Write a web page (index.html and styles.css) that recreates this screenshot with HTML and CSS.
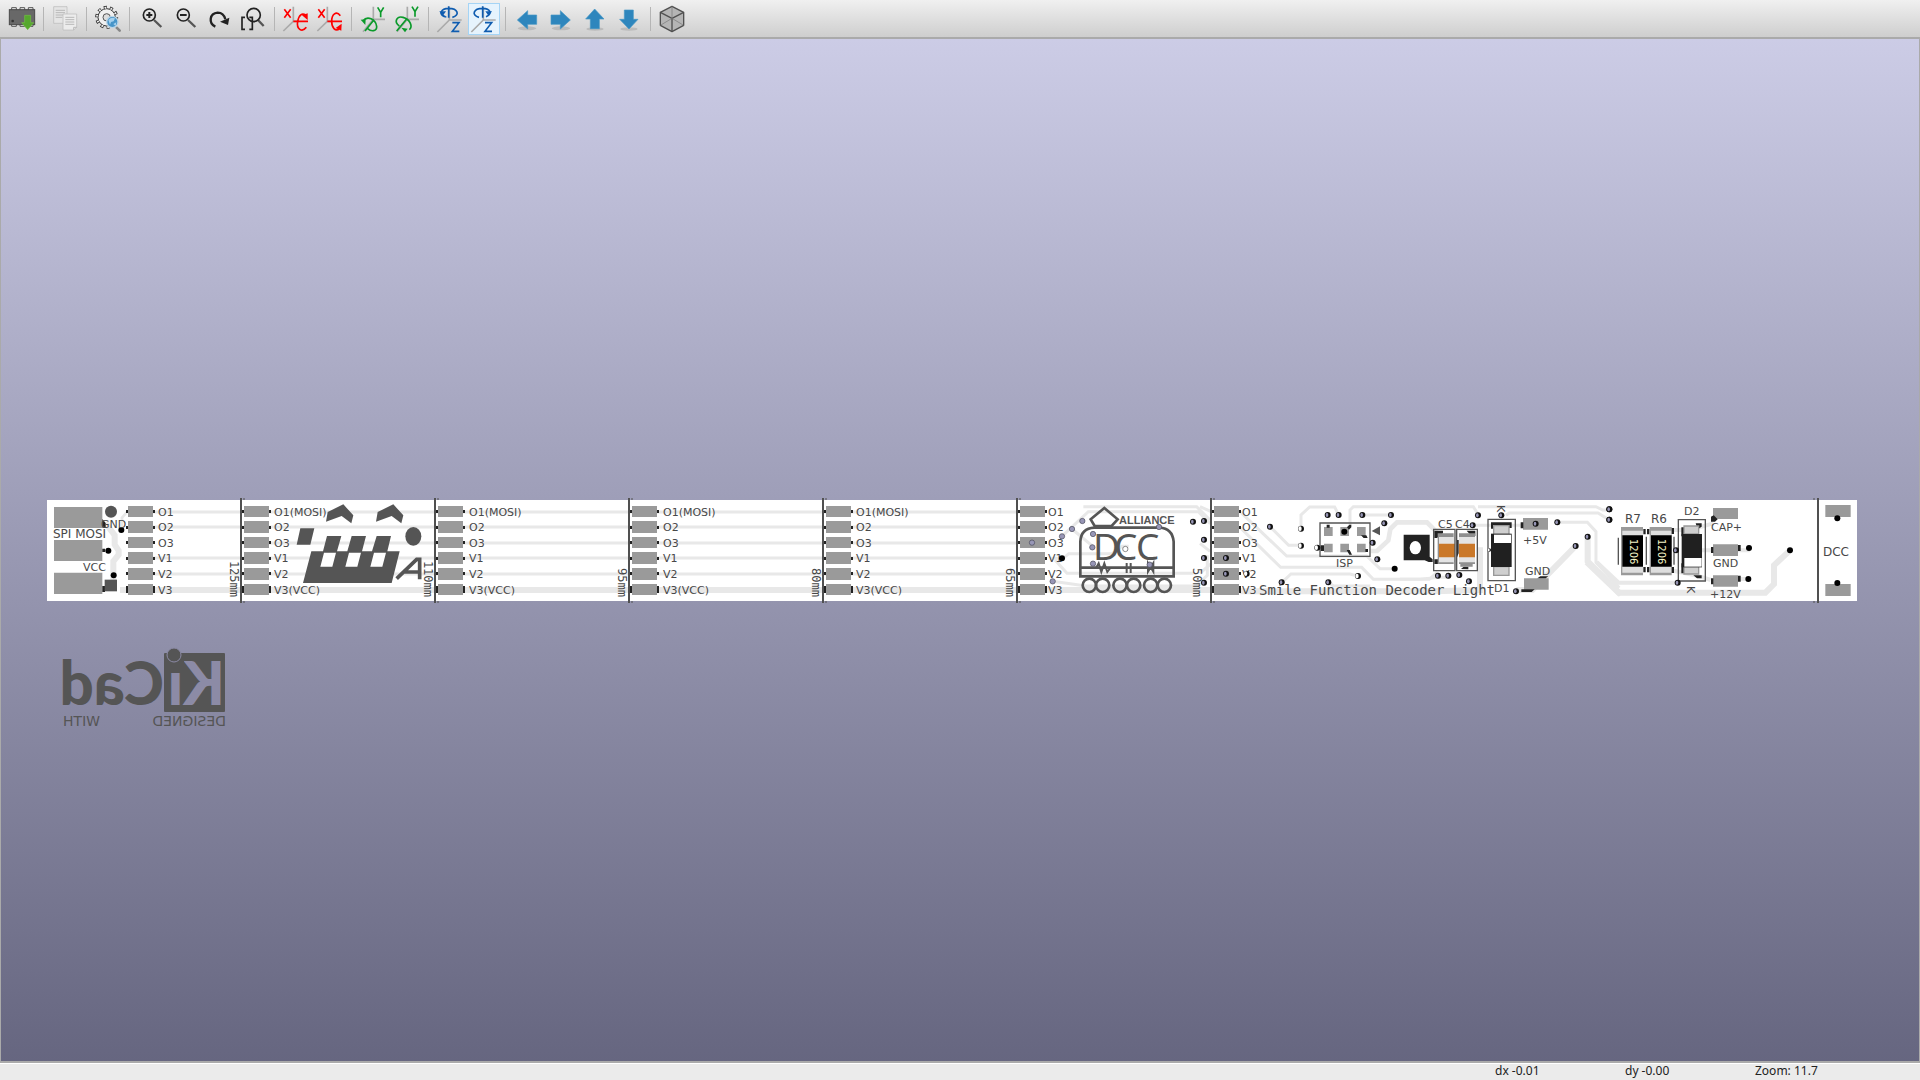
FILE: index.html
```html
<!DOCTYPE html>
<html lang="en">
<head>
<meta charset="utf-8">
<title>3D Viewer</title>
<link rel="stylesheet" href="styles.css">
</head>
<body>
<header class="toolbar" role="toolbar" aria-label="3D viewer">
  <button class="tool" aria-label="Reload board"><svg viewBox="0 0 96 96">
    <g fill="#eee" stroke="#555" stroke-width="3"><path d="M17 22v-8h14v8M42 22v-8h14v8M67 22v-8h14v8M17 62v8h14v-8M42 62v8h14v-8M67 62v8h14v-8"/></g>
    <rect x="10" y="20" width="76" height="45" fill="#686868" stroke="#494949" stroke-width="3"/><circle cx="20" cy="54" r="4" fill="#333"/>
    <path d="M56 37h18v22h9L65 80 47 59h9z" fill="#56a82e" stroke="#72c043" stroke-width="2"/></svg></button>
  <span class="sep"></span>
  <button class="tool" aria-label="Copy image"><svg viewBox="0 0 96 96" stroke="#b8b8b8" stroke-width="2">
    <path d="M14 11h40v50H14z" fill="#e5e5e5"/><path d="M20 22h28M20 29h28M20 36h28M20 43h20" stroke-width="3"/>
    <path d="M42 33h41v40l-9 8H42z" fill="#ececec"/><path d="M49 43h27M49 50h27M49 57h27M49 64h27M83 73h-9v8" stroke-width="3" fill="none"/></svg></button>
  <span class="sep"></span>
  <button class="tool" aria-label="Render options"><svg viewBox="0 0 96 96">
    <circle cx="44" cy="43" r="30" fill="none" stroke="#333" stroke-width="9" stroke-dasharray="9.4 9.4"/>
    <circle cx="44" cy="43" r="26" fill="#f0f0f0" stroke="#333" stroke-width="3"/>
    <circle cx="44" cy="43" r="29" fill="none" stroke="#f0f0f0" stroke-width="6" stroke-dasharray="5 13.2" stroke-dashoffset="-2"/>
    <circle cx="44" cy="43" r="11" fill="#ddd" stroke="#555" stroke-width="3"/>
    <path d="M74 74l9 9" stroke="#888" stroke-width="8" stroke-linecap="round"/>
    <circle cx="61" cy="57" r="17" fill="#4795c9" stroke="#bcd5e6" stroke-width="4"/><path d="M49 51q9-10 20-5l-4 9-8 2-3 8zM64 63l9-5-2 11z" fill="#a5d0ed"/></svg></button>
  <span class="sep"></span>
  <button class="tool" aria-label="Zoom in"><svg viewBox="0 0 96 96" class="ink"><path d="M57 51l22 21" stroke="#555" stroke-width="7"/><circle cx="43" cy="36" r="18"/><path d="M43 27v18M34 36h18" stroke-width="6"/></svg></button>
  <button class="tool" aria-label="Zoom out"><svg viewBox="0 0 96 96" class="ink"><path d="M57 51l22 21" stroke="#555" stroke-width="7"/><circle cx="43" cy="36" r="18"/><path d="M33 36h20" stroke-width="6"/></svg></button>
  <button class="tool" aria-label="Redraw"><svg viewBox="0 0 96 96" class="ink"><path d="M37 71C16 61 19 31 44 29c13 0 20 8 23 20" stroke-width="7"/><path d="M79 44l-4 22-24-10z" fill="#222" stroke="none"/></svg></button>
  <button class="tool" aria-label="Zoom to fit"><svg viewBox="0 0 96 96" class="ink"><path d="M24 43h-9v36h9M37 43h9v36h-9" stroke-width="5"/><path d="M63 51l17 18" stroke="#555" stroke-width="7"/><circle cx="50" cy="36" r="20"/></svg></button>
  <span class="sep"></span>
  <button class="tool" aria-label="Rotate X clockwise"><svg viewBox="0 0 96 96" class="spin red"><path class="axis" d="M40 11v44l-30 29M40 55h16"/><path d="M40 55h44M79 73c-14 18-30 4-26-18 4-20 13-26 24-19"/><path class="head" d="M83 31v20L66 37z"/><path d="M13 19l19 25M32 19L13 44"/></svg></button>
  <button class="tool" aria-label="Rotate X counterclockwise"><svg viewBox="0 0 96 96" class="spin red"><path class="axis" d="M40 11v44l-30 29M40 55h16"/><path d="M40 55h44M79 38c-12-16-26-4-26 17 0 20 11 30 22 24"/><path class="head" d="M83 62l-1 21-17-8z"/><path d="M13 19l19 25M32 19L13 44"/></svg></button>
  <span class="sep"></span>
  <button class="tool" aria-label="Rotate Y clockwise"><svg viewBox="0 0 96 96" class="spin green"><path class="axis" d="M49 11v38h35M49 49L18 86"/><path d="M24 84l27-34M18 54c13-18 38-5 41 16 1 15-16 17-27 7"/><path class="head" d="M11 50l15-1-1 17z"/><path d="M62 13l9 15 9-15M71 28v15"/></svg></button>
  <button class="tool" aria-label="Rotate Y counterclockwise"><svg viewBox="0 0 96 96" class="spin green"><path class="axis" d="M49 11v38h35M49 49L18 86"/><path d="M17 84l30-36M25 69C7 56 18 38 36 43c22 6 30 28 19 37"/><path class="head" d="M31 74l19 3-8 11z"/><path d="M63 11l9 15 9-15M72 26v15"/></svg></button>
  <span class="sep"></span>
  <button class="tool" aria-label="Rotate Z clockwise"><svg viewBox="0 0 96 96" class="spin blue"><path class="axis" d="M46 11v40h37M46 51L10 87"/><path d="M44 10v34M55 43c24-6 17-27-11-27-24 0-30 18-10 25M20 28c2 8 9 13 17 14"/><path class="head" d="M16 25l20 0-10 14z"/><path d="M55 59h20L55 85h21"/></svg></button>
  <button class="tool on" aria-label="Rotate Z counterclockwise" aria-pressed="true"><svg viewBox="0 0 96 96" class="spin blue"><path class="axis" d="M46 11v40h37M46 51L10 87"/><path d="M44 10v34M33 43c-24-6-17-27 11-27 24 0 30 18 10 25"/><path class="head" d="M72 25l-20 0 10 14z"/><path d="M51 59h20L51 85h21"/></svg></button>
  <span class="sep"></span>
  <button class="tool" aria-label="Move left"><svg viewBox="0 0 96 96" class="arrow"><ellipse cx="48" cy="76" rx="28" ry="6"/><path d="M19 51l31-28v13h27v28H50v14z"/></svg></button>
  <button class="tool" aria-label="Move right"><svg viewBox="0 0 96 96" class="arrow"><ellipse cx="48" cy="76" rx="28" ry="6"/><path d="M76 51L46 23v13H18v28h28v14z"/></svg></button>
  <button class="tool" aria-label="Move up"><svg viewBox="0 0 96 96" class="arrow"><ellipse cx="48" cy="78" rx="26" ry="5"/><path d="M47 18l28 30H61v29H34V48H20z"/></svg></button>
  <button class="tool" aria-label="Move down"><svg viewBox="0 0 96 96" class="arrow"><ellipse cx="48" cy="78" rx="26" ry="5"/><path d="M48 78L20 49h14V21h27v28h14z"/></svg></button>
  <span class="sep"></span>
  <button class="tool" aria-label="Orthographic projection"><svg viewBox="0 0 96 96" fill="#b5b5b5" stroke="#505050" stroke-width="4" stroke-linejoin="round"><path d="M48 10l35 18v39L48 86 13 67V28z"/><path d="M13 28l35 18 35-18M48 46v40" fill="none"/><path d="M48 10v36L13 67M48 46l35 21" fill="none" stroke="#777" stroke-width="2"/></svg></button>
</header>

<main class="view">
<svg class="scene" viewBox="1 39 1918 1022" role="img" aria-label="Board, top view">
  <defs>
    <g id="pads" class="pad">
      <path class="hole" d="M1 10h2v3H1zM28 10h2v3h-2zM1 26h2v3H1zM28 26h2v3h-2zM1 41h2v3H1zM28 41h2v3h-2zM1 57h2v3H1zM28 57h2v3h-2zM1 72h2v3H1zM28 72h2v3h-2zM1 86h2v7H1zM28 86h2v7h-2z"/>
      <path d="M3 6h25v11H3zM3 21h25v12H3zM3 37h25v11H3zM3 52h25v12H3zM3 68h25v12H3zM3 84h25v11H3z"/>
    </g>
    <g id="names" class="label"><text y="516">O1</text><text y="531">O2</text><text y="547">O3</text><text y="562">V1</text><text y="578">V2</text><text y="594">V3</text></g>
    <g id="namesSpi" class="label"><text y="516">O1(MOSI)</text><text y="531">O2</text><text y="547">O3</text><text y="562">V1</text><text y="578">V2</text><text y="594">V3(VCC)</text></g>
    <g id="cut"><path d="M0 498v105" stroke="#505050" stroke-width="2"/><path d="M2 499h2M2 602h2" stroke="#505050"/></g>
    <g id="via"><circle r="9" fill="#111"/><ellipse cx="-2" rx="4" ry="6" fill="#9695b5"/></g>
    <g id="hole"><circle r="8" fill="#9796b6" stroke="#484858" stroke-width="2"/></g>
    <g id="open"><circle r="9" fill="#111"/><ellipse cx="-3" rx="5" ry="7" fill="#fff"/></g>
  </defs>

  <rect x="47" y="500" width="1810" height="101" fill="#fff"/>

  <g class="trace" stroke-width="3">
    <path d="M153 512h872M153 527h872M241 543h775M153 558h863M153 574h863"/>
    <path d="M120 590h1090" stroke-width="6"/>
  </g>

  <g transform="translate(40 490) scale(.33333)">
    <path class="trace" d="M196 98l28 38v28l12 18v12l-16 20v76" stroke-width="18"/>
    <path class="trace" d="M262 65l-16 18v36" stroke-width="8"/>
    <path fill="#9a9a9a" d="M42 51h145v63H42zM42 150h145v63H42zM42 248h145v64H42z"/>
    <path class="hole" d="M187 87l10 12v14h-10zM187 176h8v10h-8zM187 288h8v18h-8z"/>
    <circle cx="213" cy="65" r="18" fill="#555"/><path d="M194 269h37v35h-37z" fill="#555"/>
    <circle cx="244" cy="120" r="9"/><circle cx="205" cy="182" r="9"/><circle cx="221" cy="256" r="9"/>
  </g>
  <g class="label"><text class="large" x="53" y="538">SPI MOSI</text><text x="83" y="571">VCC</text><text x="101" y="528">GND</text></g>

  <use href="#pads" x="125" y="500"/><use href="#names" x="158"/>
  <use href="#pads" x="241" y="500"/><use href="#namesSpi" x="274"/>
  <use href="#pads" x="435" y="500"/><use href="#namesSpi" x="469"/>
  <use href="#pads" x="629" y="500"/><use href="#namesSpi" x="663"/>
  <use href="#pads" x="823" y="500"/><use href="#namesSpi" x="856"/>

  <!-- tram logo -->
  <g transform="translate(230 490) scale(.33333)" fill="#555">
    <path d="M293 66l47-23 30 33-6 24-29-22-47 17zM443 66l47-23 30 33-6 24-29-22-47 17z"/>
    <path d="M211 115h42l-12 49h-41zM291 138h43l-13 46h31l13-46h43l-12 46h30l14-46h43l-11 46h37l-24 95H219l25-95h35z"/>
    <path fill="#fff" d="M282 188h36l-11 42h-36zM357 188h36l-11 42h-36zM432 188h36l-11 42h-36z"/>
    <ellipse cx="550" cy="139" rx="24" ry="28"/>
    <path d="M500 266l60-58h9v60M520 246h46" fill="none" stroke="#555" stroke-width="11"/>
  </g>

  <!-- locomotive logo and its surroundings -->
  <g transform="translate(1000 490) scale(.33333)">
    <g class="trace" stroke-width="9"><path d="M185 140l80-75h330l36 36M216 117l60 50M158 274l100 14h330l34-32v-60M250 50h340l40 40M150 205h40l16-14h130l30-22h20M165 210l36 40h380"/></g>
    <g fill="none" stroke="#555" stroke-width="8">
      <path d="M284 108l-12-20 41-34 40 34-18 20z"/>
      <path d="M241 259V155q2-40 42-42h196q38 2 42 42v104zM241 233h280"/>
      <path d="M288 234l8-14 8 26 9-26 9 26 9-12M380 219v30M392 219v30M444 219l16 26v-26l-16 26z" stroke-width="6"/>
      <circle cx="268" cy="286" r="20"/><circle cx="308" cy="286" r="20"/><circle cx="360" cy="286" r="20"/><circle cx="401" cy="286" r="20"/><circle cx="452" cy="286" r="20"/><circle cx="493" cy="286" r="20"/>
    </g>
  </g>
  <text class="dcc" x="1093 1114 1136" y="560">DCC</text>
  <text class="alliance" x="1119" y="524">ALLIANCE</text>
  <use href="#pads" x="1017" y="500"/><use href="#names" x="1048"/>
  <g transform="translate(1000 490) scale(.33333)">
    <use href="#hole" x="96" y="158"/><use href="#hole" x="186" y="139"/><use href="#hole" x="216" y="117"/><use href="#hole" x="247" y="93"/><use href="#hole" x="279" y="132"/><use href="#hole" x="277" y="172"/><use href="#hole" x="279" y="221"/><use href="#hole" x="158" y="274"/><use href="#hole" x="477" y="111"/><use href="#hole" x="449" y="224"/>
    <circle cx="376" cy="177" r="8" fill="#fff" stroke="#555" stroke-width="2"/><circle cx="186" cy="205" r="9"/>
    <use href="#via" x="579" y="95"/><use href="#via" x="612" y="93"/><use href="#via" x="612" y="149"/><use href="#via" x="612" y="204"/><use href="#via" x="612" y="278"/>
  </g>

  <!-- programming header area -->
  <g transform="translate(1200 490) scale(.33333)">
    <g class="trace" stroke-width="9">
      <path d="M120 65l140 133h240l40 38h44M120 112l122 120h243l35 36h140l60-6h30M210 110l56 56h37M303 115V75l26-24h75l12 24M450 105V60l10-10h360l16 26M487 75h86M245 278l28-26h177l23 6M385 277l16 11h110"/>
      <path d="M513 183h18l34-32 6-34 20-20h90l30 30" stroke-width="14"/>
      <path d="M0 50l32 14M0 160l30 24M0 250l34-30"/>
    </g>
    <path class="trace" d="M120 304h580l140-4v-128" stroke-width="18"/>
    <path d="M360 99h150v100H360z" fill="none" stroke="#555" stroke-width="4"/>
    <path d="M372 111h26v27h-26zM421 111h26v27h-26zM471 111h26v27h-26zM372 161h26v26h-26zM421 161h26v26h-26zM471 161h26v26h-26z" fill="#9a9a9a"/>
    <path class="hole" d="M380 104h9v9h-9zM441 112l7-8h6v8l-7 7zM483 136h16l4 8h-12zM362 166h10v17h-10zM440 180h9l7 14h-8zM496 177h8v9h-8z"/>
    <circle cx="433" cy="125" r="9"/><path d="M515 123l25-14v27z" fill="#555"/>
    <use href="#via" x="383" y="75"/><use href="#via" x="416" y="75"/><use href="#via" x="487" y="75"/><use href="#via" x="573" y="75"/><use href="#via" x="553" y="100"/><use href="#via" x="518" y="158"/><use href="#via" x="532" y="208"/><use href="#via" x="210" y="110"/><use href="#via" x="245" y="277"/><use href="#via" x="385" y="277"/>
    <use href="#open" x="303" y="116"/><use href="#open" x="303" y="167"/><use href="#open" x="352" y="173"/><use href="#open" x="474" y="258"/><circle cx="584" cy="236" r="9"/>
  </g>
  <use href="#pads" x="1211" y="500"/><use href="#names" x="1242"/>
  <g transform="translate(1200 490) scale(.33333)"><use href="#via" x="78" y="204"/><use href="#via" x="78" y="251"/><use href="#open" x="140" y="251"/></g>
  <text class="label" x="1336" y="567">ISP</text>

  <g><use href="#cut" x="241"/><use href="#cut" x="435"/><use href="#cut" x="629"/><use href="#cut" x="823"/><use href="#cut" x="1017"/><use href="#cut" x="1211"/><path d="M1818 498v105" stroke="#505050" stroke-width="2"/><path d="M1813 499h2M1813 602h2" stroke="#505050"/></g>
  <g class="label dist">
    <text transform="translate(230 597) rotate(90)">125mm</text><text transform="translate(424 597) rotate(90)">110mm</text><text transform="translate(618 597) rotate(90)">95mm</text><text transform="translate(812 597) rotate(90)">80mm</text><text transform="translate(1006 597) rotate(90)">65mm</text><text transform="translate(1193 597) rotate(90)">50mm</text>
  </g>

  <!-- capacitors and D1 -->
  <g transform="translate(1400 490) scale(.33333)">
    <g class="trace" stroke-width="9">
      <path d="M0 268h88l24-22M220 106h150M318 76l10-7h266l33 20M234 50h354l20 10h20M472 97h90l26 28v92l70 76"/>
      <path d="M527 168l-90 92-40 40h-48M563 140v74l100 100" stroke-width="18"/>
    </g>
    <path d="M11 134h78v66l9 8v8h-12l-12-5H11z" fill="#222"/><ellipse cx="46" cy="173" rx="17" ry="20" fill="#fff"/>
    <path class="hole" d="M103 122h26v8l-18 14h-8zM168 150h8v40l-8 20zM200 122h26v16h-12zM103 208h12v14h-12zM183 237l8-7h14v8z"/>
    <path d="M113 130h48v92h-48zM177 130h48v92h-48zM181 220h37v10h-37z" fill="#8f8f8f"/>
    <path d="M117 141h48v76h-48zM177 141h48v76h-48z" fill="#e4e4e4"/><path d="M117 161h48v41h-48zM177 161h48v41h-48z" fill="#ca7829"/>
    <path d="M101 118h64v124h-64zM170 118h62v124h-62zM264 88h82v184h-82z" fill="none" stroke="#555" stroke-width="4"/>
    <path d="M273 97h62v17h-8v-8h-46v10h-8z" class="hole"/>
    <path d="M281 107h46v26h-46zM281 230h46v26h-46z" fill="#cfcfcf" stroke="#999" stroke-width="4"/>
    <path d="M273 131h62v100h-62z" fill="#202020"/><path d="M282 134h51v25h-51z" fill="#fff"/>
    <path d="M369 84h75v35h-75zM372 265h74v34h-74z" fill="#9a9a9a"/>
    <path class="hole" d="M362 97h8v18h-8zM412 265l9-6h24l-8 6zM364 298h40l-9 8h-31z"/>
    <use href="#open" x="268" y="180" transform="translate(107 72) scale(.6)"/>
    <use href="#via" x="234" y="76"/><use href="#via" x="218" y="106"/><use href="#via" x="304" y="76"/><use href="#via" x="407" y="101"/><use href="#via" x="472" y="97"/><use href="#via" x="628" y="58"/><use href="#via" x="628" y="89"/><use href="#via" x="563" y="140"/><use href="#via" x="527" y="168"/><use href="#via" x="114" y="257"/><use href="#via" x="145" y="257"/><use href="#via" x="178" y="255"/><use href="#via" x="207" y="274"/><use href="#via" x="348" y="304"/>
  </g>
  <g class="label"><text x="1438" y="528">C5</text><text x="1455" y="528">C4</text><text x="1494" y="592">D1</text><text x="1523" y="544">+5V</text><text x="1525" y="575">GND</text></g>
  <text class="label" transform="translate(1497 505) rotate(90)">K</text>
  <text class="label title" x="1259" y="595">Smile Function Decoder Light</text>

  <!-- resistors, D2 and the supply pads -->
  <g transform="translate(1600 490) scale(.33333)">
    <path class="trace" d="M-40 216l96 92h440l26-26v-56l48-45" stroke-width="18"/>
    <path class="trace" d="M-10 216l66 62h180M210 120h60l70-20M210 240l92 20 30 10M300 181h150M400 267h45" stroke-width="12"/>
    <path d="M63 111h66v145H63zM149 111h66v145h-66z" fill="#9a9a9a"/>
    <path d="M67 122h62v126H67zM153 122h62v126h-62z" fill="#dedede"/>
    <path d="M67 136h62v94H67zM153 136h62v94h-62z"/>
    <path d="M55 143v81M139 140v84M222 140v84" fill="none" stroke="#555" stroke-width="4"/>
    <path class="hole" d="M130 117h7v16h-7zM141 117h7v16h-7zM215 114h7v18h-7zM130 231h7v16h-7zM141 231h7v16h-7zM215 231h7v18h-7zM244 112h8v27h-8zM244 220h8v30h-8zM287 100h18v10l-12 8zM280 256h25v9h-14z"/>
    <path d="M252 108h44v24h-44zM252 230h44v22h-44z" fill="#cfcfcf" stroke="#999" stroke-width="4"/>
    <path d="M245 132h61v100h-61z" fill="#202020"/><path d="M253 204h52v26h-52z" fill="#fff"/>
    <path d="M235 89h81v184h-81z" fill="none" stroke="#555" stroke-width="4"/>
    <path d="M339 54h75v33h-75zM339 163h75v35h-75zM339 256h75v34h-75zM676 45h76v36h-76zM676 282h76v36h-76z" fill="#9a9a9a"/>
    <path class="hole" d="M333 80l8-4 12 12-8 7h-12zM333 171h7v18h-7zM414 165h8v18h-8zM333 265h7v18h-7zM414 257h8v18h-8z"/>
    <circle cx="447" cy="174" r="9"/><circle cx="445" cy="267" r="9"/><circle cx="570" cy="181" r="9"/><circle cx="712" cy="85" r="9"/><circle cx="712" cy="279" r="9"/>
    <use href="#via" x="28" y="58"/><use href="#via" x="28" y="89"/><use href="#via" x="228" y="181"/><use href="#via" x="233" y="278"/>
  </g>
  <g class="label"><text x="1684" y="515">D2</text><text x="1711" y="531">CAP+</text><text x="1713" y="567">GND</text><text x="1710" y="598">+12V</text></g>
  <g class="label large"><text x="1625" y="523">R7</text><text x="1651" y="523">R6</text><text x="1823" y="556">DCC</text></g>
  <text class="label" transform="translate(1687 586) rotate(90)">K</text>
  <g class="value"><text transform="translate(1630 539) rotate(90)">1206</text><text transform="translate(1658 539) rotate(90)">1206</text></g>

  <!-- mirrored silkscreen credit from the back side -->
  <rect x="164" y="653" width="61" height="59" rx="1" fill="#555"/>
  <g class="credit" transform="translate(226 0) scale(-1 1)">
    <text class="ki" x="1" y="705">Ki</text>
    <text class="cad" x="62" y="705">Cad</text>
    <text class="made" x="0" y="726">DESIGNED</text>
    <text class="made" x="126" y="726">WITH</text>
  </g>
  <path d="M168 658h16v14h-16z" fill="#555"/><circle cx="174" cy="655" r="7" fill="#555" stroke="#8c8ba6" stroke-width="1"/>
</svg>
</main>

<footer class="status"><span></span><span>dx -0.01</span><span>dy -0.00</span><span>Zoom: 11.7</span></footer>
</body>
</html>
```
FILE: styles.css
```css
* { box-sizing: border-box; }
body { margin: 0; height: 100vh; display: flex; flex-direction: column; background: #ebebeb; font-family: "Noto Sans", sans-serif; }

.toolbar { display: flex; gap: 2px; padding: 3px 6px 2px; background: linear-gradient(#f0f0f0, #cecece); border-bottom: 2px solid #aaa; }
.tool { width: 32px; height: 32px; padding: 0; border: 0; background: none; }
.tool svg { display: block; width: 100%; height: 100%; }
.tool.on { background: #e6f3fd; box-shadow: inset 0 0 0 1px #a5d4f5; }
.sep { width: 7px; margin: 4px 0; background: linear-gradient(#b5b5b5, #b5b5b5) center / 1px 100% no-repeat; }
.ink { fill: none; stroke: #222; stroke-width: 5; }
.spin { fill: none; stroke-width: 5; }
.spin .axis { stroke: #aaa; }
.spin .head { stroke: none; }
.red { stroke: #f00; }
.red .head { fill: #f00; }
.green { stroke: #0a9a2a; }
.green .head { fill: #0a9a2a; }
.blue { stroke: #0f5cb0; }
.blue .head { fill: #0f5cb0; }
.arrow path { fill: #2e86bd; stroke: #4697c6; stroke-width: 2; }
.arrow ellipse { fill: #000; opacity: .12; }

.view { flex: 1; min-height: 0; background: linear-gradient(#cccce6, #666680); border: solid #aaa; border-width: 0 1px 2px; }
.scene { display: block; width: 100%; height: 100%; }
.trace { fill: none; stroke: #e8e8e8; }
.pad { fill: #9a9a9a; }
.hole { fill: #222; }
.label { fill: #484848; font: 11px "DejaVu Sans", sans-serif; }
.large { font-size: 12px; }
.title { font: 14px "DejaVu Sans Mono", monospace; }
.dist { font: 12px "DejaVu Sans Mono", monospace; text-anchor: end; }
.value { fill: #f4f4c8; font: 10px "DejaVu Sans", sans-serif; }
.dcc { fill: #555; font: 37px "Noto Sans", sans-serif; }
.alliance { fill: #555; font: bold 11px "Liberation Sans", sans-serif; }
.credit { fill: #555; }
.ki, .cad { font: 900 60px Lato, sans-serif; }
.ki { fill: #8c8ba6; }
.made { font: 14px "DejaVu Sans", sans-serif; }

.status { display: grid; grid-template-columns: 1fr 130px 130px 165px; height: 17px; border-top: 1px solid #fff; color: #222; font-size: 12px; line-height: 14px; }
```
